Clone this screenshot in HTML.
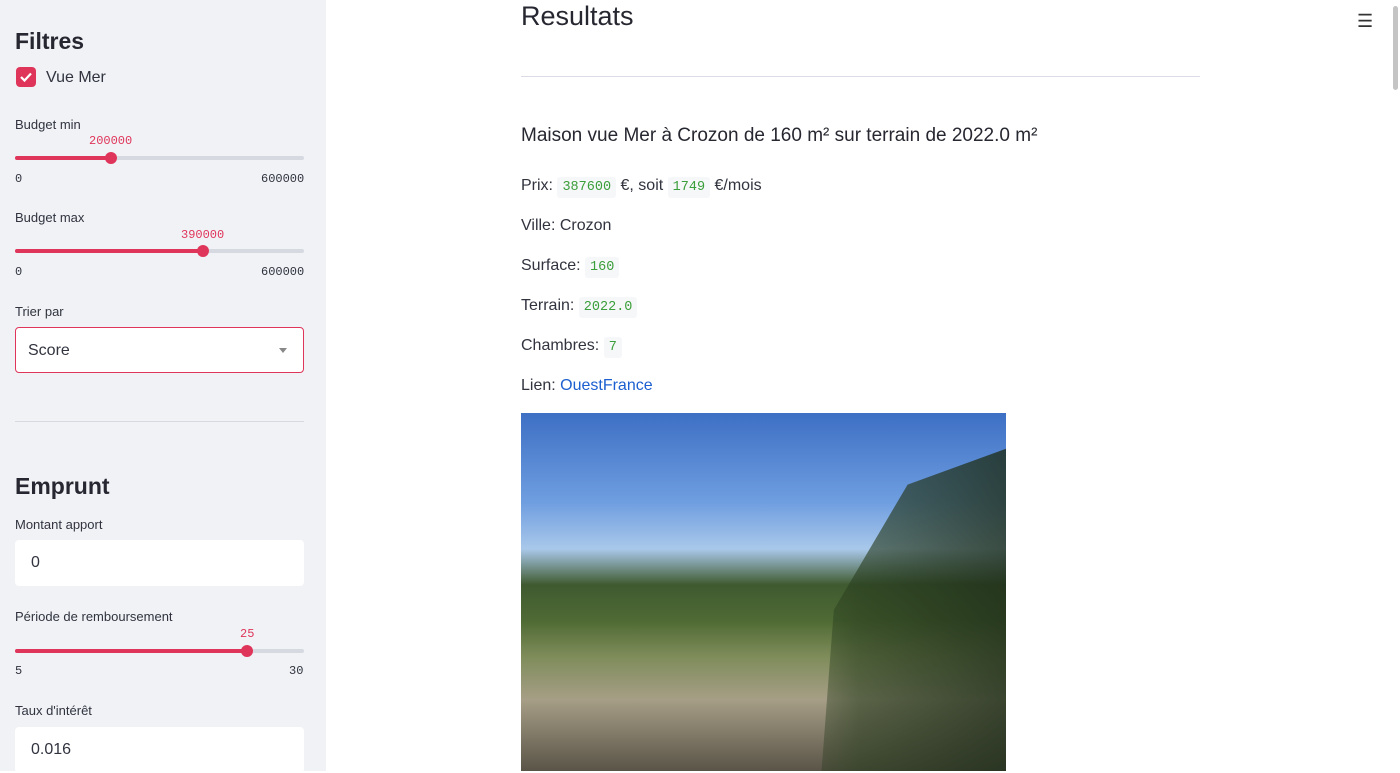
<!DOCTYPE html>
<html><head><meta charset="utf-8"><style>
*{box-sizing:border-box;margin:0;padding:0}
body{width:1400px;height:771px;overflow:hidden;background:#fff;font-family:"Liberation Sans",sans-serif;color:#31333f;position:relative}
.sb{position:absolute;left:0;top:0;width:326px;height:771px;background:#f0f2f6}
.abs{position:absolute}
.h{font-weight:bold;font-size:23px;color:#262730}
.lbl{font-size:13px;color:#31333f}
.mono{font-family:"Liberation Mono",monospace;font-size:12px}
.track{position:absolute;left:15px;width:289px;height:4px;border-radius:2px;background:#d6d9e0}
.fill{position:absolute;left:0;top:0;height:4px;background:#e0355a;border-radius:2px}
.knob{position:absolute;top:-4px;width:12px;height:12px;border-radius:50%;background:#e0355a;margin-left:-6px}
.inp{position:absolute;left:15px;width:289px;height:46px;background:#fff;border-radius:4px;font-size:16px;padding:14px 16px}
.main p{position:absolute;left:521px;font-size:16px}
code{font-family:"Liberation Mono",monospace;font-size:13.5px;color:#3a9e3a;background:#f6f7f9;padding:3px 5px;border-radius:3px}
</style></head><body>
<div class="sb">
<div class="abs h" style="left:15px;top:28px">Filtres</div>
<div class="abs" style="left:16px;top:67px;width:20px;height:20px;background:#e0355a;border-radius:4px"><svg width="20" height="20"><path d="M5 10l3.5 3.5L15 6.5" stroke="#fff" stroke-width="2.2" fill="none"/></svg></div>
<div class="abs" style="left:46px;top:69px;font-size:16px">Vue Mer</div>
<div class="abs lbl" style="left:15px;top:117px">Budget min</div>
<div class="abs mono" style="left:89px;top:134px;color:#e0355a">200000</div>
<div class="track" style="top:156px"><div class="fill" style="width:96px"></div><div class="knob" style="left:96px"></div></div>
<div class="abs mono" style="left:15px;top:172px">0</div>
<div class="abs mono" style="left:261px;top:172px">600000</div>
<div class="abs lbl" style="left:15px;top:210px">Budget max</div>
<div class="abs mono" style="left:181px;top:228px;color:#e0355a">390000</div>
<div class="track" style="top:249px"><div class="fill" style="width:188px"></div><div class="knob" style="left:188px"></div></div>
<div class="abs mono" style="left:15px;top:265px">0</div>
<div class="abs mono" style="left:261px;top:265px">600000</div>
<div class="abs lbl" style="left:15px;top:304px">Trier par</div>
<div class="inp" style="top:327px;border:1.5px solid #e0355a;padding:14px 12px">Score<span style="position:absolute;right:16px;top:20px;border:4px solid transparent;border-top:5px solid #888"></span></div>
<div class="abs" style="left:15px;top:421px;width:289px;height:1px;background:#d6d9e0"></div>
<div class="abs h" style="left:15px;top:473px">Emprunt</div>
<div class="abs lbl" style="left:15px;top:517px">Montant apport</div>
<div class="inp" style="top:540px">0</div>
<div class="abs lbl" style="left:15px;top:609px">Période de remboursement</div>
<div class="abs mono" style="left:240px;top:627px;color:#e0355a">25</div>
<div class="track" style="top:649px"><div class="fill" style="width:232px"></div><div class="knob" style="left:232px"></div></div>
<div class="abs mono" style="left:15px;top:664px">5</div>
<div class="abs mono" style="left:289px;top:664px">30</div>
<div class="abs lbl" style="left:15px;top:703px">Taux d'intérêt</div>
<div class="inp" style="top:727px">0.016</div>
</div>
<div class="main">
<div class="abs" style="left:521px;top:1px;font-size:27px;color:#262730">Resultats</div>
<div class="abs" style="left:521px;top:76px;width:679px;height:1px;background:#dcdbe6"></div>
<div class="abs" style="left:521px;top:125px;font-size:19px;color:#262730">Maison vue Mer à Crozon de 160 m² sur terrain de 2022.0 m²</div>
<p style="top:177px">Prix: <code>387600</code> €, soit <code>1749</code> €/mois</p>
<p style="top:217px">Ville: Crozon</p>
<p style="top:257px">Surface: <code>160</code></p>
<p style="top:297px">Terrain: <code>2022.0</code></p>
<p style="top:337px">Chambres: <code>7</code></p>
<p style="top:377px">Lien: <span style="color:#1c5fd0">OuestFrance</span></p>
<div class="abs" style="left:521px;top:413px;width:485px;height:358px;background:linear-gradient(180deg,#3d6fc4 0%,#6f9ee0 25%,#a9c8ea 38%,#3f5a30 48%,#4f6a34 58%,#7e8c5a 68%,#a69e86 80%,#5a5448 100%)"></div>
<div class="abs" style="left:760px;top:413px;width:246px;height:358px;background:linear-gradient(90deg,rgba(40,60,30,0) 0%,rgba(40,60,30,.6) 40%,rgba(30,45,25,.8) 100%);clip-path:polygon(30% 55%,60% 20%,100% 10%,100% 100%,25% 100%)"></div>
</div>
<div class="abs" style="left:1357px;top:11px;font-size:18px;color:#333">☰</div>
<div class="abs" style="left:1393px;top:6px;width:5px;height:84px;background:#c4c4c4;border-radius:3px"></div>
</body></html>
